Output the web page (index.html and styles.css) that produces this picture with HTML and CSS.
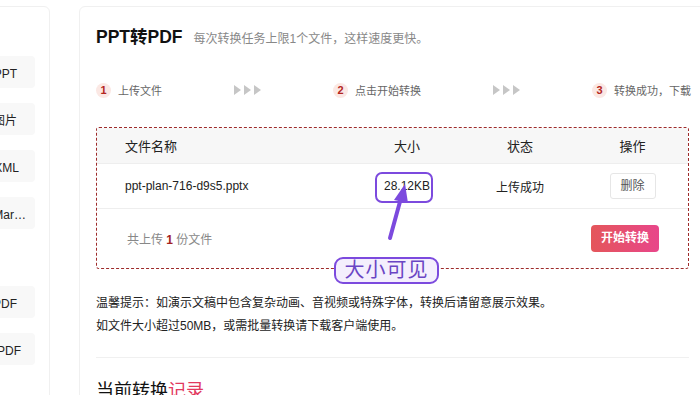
FILE: index.html
```html
<!DOCTYPE html>
<html lang="zh-CN">

<head>
    <meta charset="UTF-8">
    <meta name="viewport" content="width=device-width, initial-scale=1.0">
    <title>PPT转PDF</title>
    <link rel="stylesheet" href="styles.css">
</head>

<body>
    <div class="page">
        <div class="side">
            <div class="sideGroup">
                <div class="sideItem">PDF转PPT</div>
                <div class="sideItem">PPT转图片</div>
                <div class="sideItem sideItem-xml">PPT转XML</div>
                <div class="sideItem sideItem-long"><span>PPT转Markdown</span></div>
            </div>
            <div class="sideGroup sideGroup-next">
                <div class="sideItem">Word转PDF</div>
                <div class="sideItem sideItem-pdf">图片转PDF</div>
            </div>
        </div>

        <div class="main">
            <div class="head">
                <h1 class="title">PPT转PDF</h1>
                <span class="subTitle">每次转换任务上限1个文件，这样速度更快。</span>
            </div>

            <div class="steps">
                <div class="step"><i class="stepNum">1</i>上传文件</div>
                <div class="arrows"><b></b><b></b><b></b></div>
                <div class="step"><i class="stepNum">2</i>点击开始转换</div>
                <div class="arrows"><b></b><b></b><b></b></div>
                <div class="step"><i class="stepNum">3</i>转换成功，下载</div>
            </div>

            <div class="upload">
                <div class="row rowHead">
                    <div class="colName">文件名称</div>
                    <div>大小</div>
                    <div>状态</div>
                    <div>操作</div>
                </div>
                <div class="row rowFile">
                    <div class="colName">ppt-plan-716-d9s5.pptx</div>
                    <div>28.12KB</div>
                    <div>上传成功</div>
                    <div><span class="delBtn">删除</span></div>
                </div>
                <div class="uploadFoot">
                    <div class="count">共上传 <b>1</b> 份文件</div>
                    <span class="startBtn">开始转换</span>
                </div>

                <!-- 标注 -->
                <div class="markBox"></div>
                <svg class="markArrow" width="120" height="120" viewBox="0 0 120 120">
                    <line x1="16" y1="110" x2="27" y2="70" stroke="#7c4ade" stroke-width="4" stroke-linecap="round" />
                    <polygon points="31,56 20,72 34,75" fill="#7c4ade" />
                </svg>
                <div class="markLabel">大小可见</div>
            </div>

            <div class="tips">
                <p>温馨提示：如演示文稿中包含复杂动画、音视频或特殊字体，转换后请留意展示效果。</p>
                <p>如文件大小超过50MB，或需批量转换请下载客户端使用。</p>
            </div>

            <div class="line"></div>

            <h2 class="record">当前转换<span>记录</span></h2>
        </div>
    </div>
</body>

</html>
```

FILE: styles.css
```css
* {
    padding: 0;
    margin: 0;
    box-sizing: border-box;
}

body {
    font-family: "Liberation Sans", "Noto Sans CJK SC", sans-serif;
    color: #222;
    background-color: #fff;
    overflow: hidden;
}

.page {
    display: flex;
    gap: 29px;
    padding-top: 6px;
    margin-left: -110px;
    width: 820px;
}

.side {
    flex-shrink: 0;
    width: 160px;
    height: 420px;
    border: 1px solid #f0f0f0;
    border-radius: 6px;
    padding: 49px 14px 0 10px;
}

.sideGroup {
    display: flex;
    flex-direction: column;
    gap: 15px;
}

.sideGroup-next {
    margin-top: 57px;
}

.sideItem {
    height: 32px;
    background-color: #f8f8f8;
    border-radius: 4px;
    display: flex;
    align-items: center;
    justify-content: flex-end;
    padding-right: 18px;
    font-size: 12px;
    white-space: nowrap;
    overflow: hidden;
}

.sideItem-xml {
    padding-right: 16px;
}

.sideItem-long {
    padding-right: 5px;
}

.sideItem-long span {
    max-width: 72px;
    overflow: hidden;
    text-overflow: ellipsis;
}

.sideItem-pdf {
    padding-right: 14px;
}

.main {
    flex-shrink: 0;
    width: 627px;
    height: 420px;
    border: 1px solid #f0f0f0;
    border-radius: 6px;
    padding: 18px 16px 0;
}

.head {
    display: flex;
    align-items: baseline;
    gap: 11px;
}

.title {
    font-size: 17.5px;
    line-height: 24px;
    font-weight: bold;
    color: #111;
}

.subTitle {
    font-size: 12px;
    color: #888;
}

.steps {
    margin-top: 31px;
    height: 20px;
    display: flex;
    align-items: center;
    gap: 72px;
    white-space: nowrap;
}

.step {
    display: flex;
    align-items: center;
    gap: 7px;
    font-size: 11px;
    color: #666;
}

.stepNum {
    width: 15px;
    height: 15px;
    border-radius: 50%;
    background-color: #fbe8e4;
    color: #b3261e;
    font-style: normal;
    font-weight: bold;
    font-size: 11px;
    line-height: 15px;
    text-align: center;
}

.arrows {
    display: flex;
    gap: 3px;
}

.arrows b {
    width: 0;
    height: 0;
    border-top: 5px solid transparent;
    border-bottom: 5px solid transparent;
    border-left: 7px solid #c6c6c6;
}

.upload {
    position: relative;
    margin-top: 27px;
    border: 1px dashed #9e2b2b;
    border-radius: 3px;
}

.row {
    display: grid;
    grid-template-columns: 254px 112px 114px 1fr;
    align-items: center;
    text-align: center;
}

.colName {
    text-align: left;
    padding-left: 28px;
}

.rowHead {
    height: 35px;
    background-color: #f7f7f7;
    font-size: 13px;
    color: #222;
}

.rowFile {
    height: 45px;
    border-top: 1px solid #eeeeee;
    font-size: 12px;
}

.delBtn {
    display: inline-block;
    width: 46px;
    height: 26px;
    line-height: 24px;
    border: 1px solid #e6e6e6;
    border-radius: 3px;
    color: #555;
    font-size: 12px;
}

.uploadFoot {
    height: 60px;
    border-top: 1px solid #eeeeee;
    display: flex;
    align-items: center;
    justify-content: space-between;
    padding: 0 29px 0 30px;
}

.count {
    font-size: 12px;
    color: #888;
}

.count b {
    color: #a32222;
}

.startBtn {
    display: inline-block;
    width: 68px;
    height: 27px;
    line-height: 27px;
    text-align: center;
    border-radius: 4px;
    background: linear-gradient(90deg, #e4565a, #e8468a);
    color: #fff;
    font-size: 12px;
    font-weight: bold;
}

.markBox {
    position: absolute;
    left: 278px;
    top: 44px;
    width: 58px;
    height: 31px;
    border: 2.5px solid #7c4ade;
    border-radius: 7px;
}

.markArrow {
    position: absolute;
    left: 277px;
    top: 0;
}

.markLabel {
    position: absolute;
    left: 237px;
    top: 129px;
    width: 105px;
    height: 27px;
    border: 2px solid #7c4ade;
    border-radius: 9px;
    background-color: #f4effd;
    color: #6a45c4;
    font-size: 20px;
    line-height: 23px;
    text-align: center;
    letter-spacing: 1px;
}

.tips {
    margin-top: 23px;
    font-size: 12px;
    line-height: 23px;
    color: #222;
}

.line {
    margin-top: 19px;
    height: 1px;
    background-color: #f0f0f0;
}

.record {
    margin-top: 21px;
    font-size: 18px;
    line-height: 24px;
    font-weight: normal;
    color: #111;
}

.record span {
    color: #e23a5e;
}
```
